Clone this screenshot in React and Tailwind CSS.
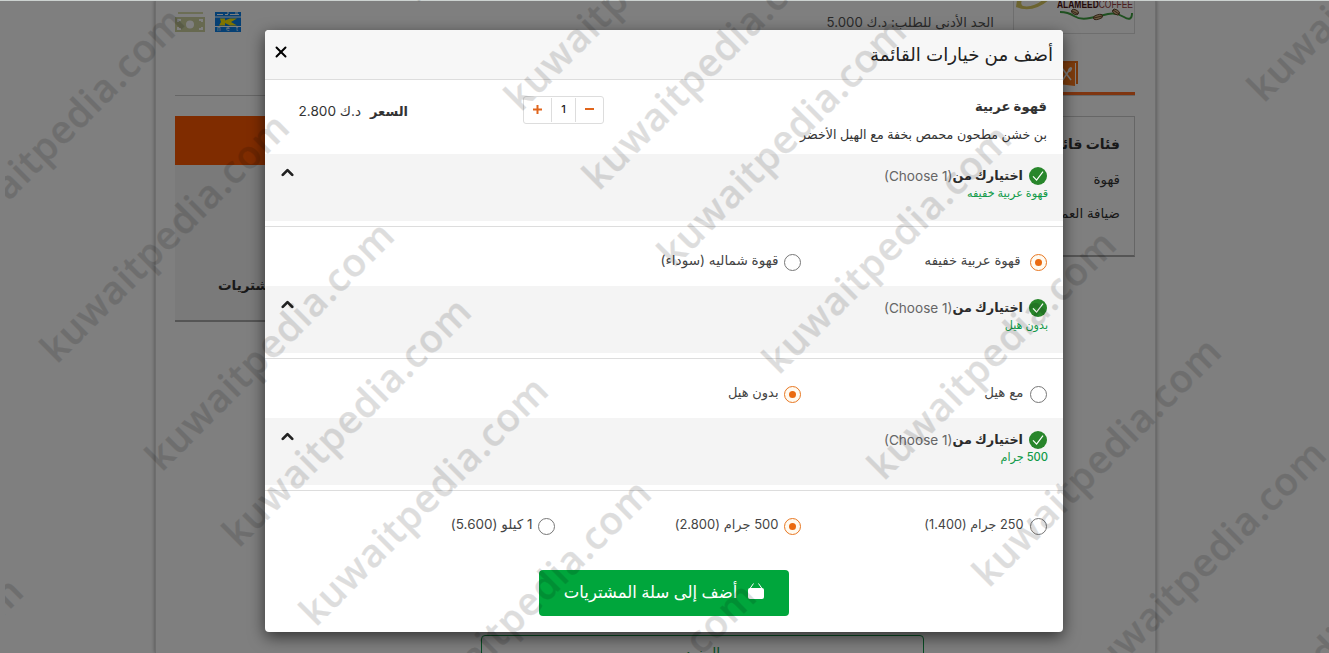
import React, { useState } from "react";
import { ChevronUp, X } from "lucide-react";

const GROUPS = [
  {
    id: "type",
    picked: 0,
    options: [
      { label: "قهوة عربية خفيفه", className: "mr-[9px] text-[13.2px]" },
      { label: "قهوة شماليه (سوداء)", className: "mr-[5px] text-[13.6px]" },
    ],
    summary: "قهوة عربية خفيفه",
  },
  {
    id: "cardamom",
    picked: 1,
    options: [
      { label: "مع هيل", className: "mr-[6px] text-[13.4px]" },
      { label: "بدون هيل", className: "mr-[5px] text-[13px]" },
    ],
    summary: "بدون هيل",
  },
  {
    id: "weight",
    picked: 1,
    options: [
      { label: "250 جرام (1.400)", className: "mr-[6px] text-[12.7px]" },
      { label: "500 جرام (2.800)", className: "mr-[5px] text-[13px]" },
      { label: "1 كيلو (5.600)", className: "mr-[5px] text-[13.5px]" },
    ],
    summary: "500 جرام",
  },
];

// left / top of the baseline start of every stamp
const STAMPS = [
  [-49, 258], [56, 364], [161, 472], [238, 548], [315, 627], [418, 730], [523, 833],
  [416, 3], [520, 112], [598, 191], [673, 268], [778, 375], [883, 481], [988, 588],
  [1093, 691], [1198, 796], [1263, 103], [-210, 828],
];

const CheckBadge = () => (
  <svg viewBox="0 0 18 18" className="w-[18px] h-[18px] shrink-0">
    <circle cx="9" cy="9" r="9" fill="#28862b" />
    <path d="M4 9.4 L7.6 13.1 L14 4.6" fill="none" stroke="#fff" strokeWidth="1.2" />
  </svg>
);

const Radio = ({ checked }) => (
  <span
    className={`w-[17px] h-[17px] rounded-full border flex items-center justify-center shrink-0 ${
      checked ? "border-[#e87722] bg-[#fffaf0]" : "border-[#777] bg-white"
    }`}
  >
    {checked && <span className="w-[7px] h-[7px] rounded-full bg-[#ea6a10]" />}
  </span>
);

const OptionGroup = ({ group }) => {
  const [picked, setPicked] = useState(group.picked);

  return (
    <div className="h-[132px] flex flex-col">
      {/* Group header */}
      <div className="h-[67px] bg-[#f4f4f4] flex justify-between pr-[15px] pl-[13px] pt-[13px]">
        <div>
          <div className="flex items-center h-[18px] mr-px whitespace-nowrap">
            <CheckBadge />
            <span className="mr-[6px] text-[12.8px] font-bold text-[#2b2b2b]">اختيارك من</span>
            <span className="text-[13.6px] text-[#666]" dir="ltr">
              (Choose 1)
            </span>
          </div>
          <div className="text-[11.2px] leading-[16px] text-[#109a48] font-medium whitespace-nowrap">
            {group.summary}
          </div>
        </div>
        <ChevronUp className="w-[19px] h-[19px] -mt-[4px] text-[#222]" strokeWidth={3.5} />
      </div>

      {/* Options */}
      <div className="mt-[5px] border-t border-[#ddd] pr-[16.5px] pt-[26.5px] flex">
        {group.options.map((o, idx) => (
          <div
            key={idx}
            className="w-[246px] h-[17px] flex items-center cursor-pointer"
            onClick={() => setPicked(idx)}
          >
            <Radio checked={picked === idx} />
            <span className={`whitespace-nowrap leading-[17px] -mt-[4px] text-[#444] ${o.className}`}>
              {o.label}
            </span>
          </div>
        ))}
      </div>
    </div>
  );
};

const Shop = () => (
  <div className="w-[1001px] h-[653px] mr-[173px] border-x border-[#ddd] bg-white shadow-[0_0_4px_#999] pr-[20px] pl-[19px] flex flex-col">
    <div className="h-[34px] flex justify-between shrink-0">
      <div className="flex">
        <div className="w-[122px] h-[34px] border border-t-0 border-[#ddd] overflow-hidden" dir="ltr">
          <svg viewBox="0 0 122 34" className="w-[122px] h-[34px]">
            <path d="M2 7 Q18 14 35 0 L29 0 Q18 8 9 6 Q6 4 8 0 L3 0z" fill="#d9c860" />
            <text x="43" y="8" fontSize="10.5" textLength="76" lengthAdjust="spacingAndGlyphs" fontFamily="Liberation Sans">
              <tspan fontWeight="bold" fill="#4a1010">ALAMEED</tspan>
              <tspan fill="#963d3d">COFFEE</tspan>
            </text>
            <path d="M46 12 Q54 12 60 16 T76 18 T94 14 T110 17 T118 13" fill="none" stroke="#3fa040" strokeWidth="2" />
            <g fill="#d8b888" stroke="#50301a" strokeWidth="0.8">
              <ellipse cx="61" cy="12" rx="3.8" ry="2.3" transform="rotate(25 61 12)" />
              <ellipse cx="84" cy="17" rx="4.8" ry="2.3" transform="rotate(-15 84 17)" />
              <ellipse cx="102" cy="12" rx="3.8" ry="2.3" transform="rotate(30 102 12)" />
              <path d="M58 11l6 3M80 18l8-2M99 10l6 4" />
            </g>
          </svg>
        </div>
        <span className="mr-[19px] mt-[12px] text-[13.25px] leading-[20px] text-[#555] whitespace-nowrap">
          الحد الأدنى للطلب: د.ك 5.000
        </span>
      </div>
      <div className="flex gap-[10px] mt-[12px]">
        <svg viewBox="0 0 26 20" className="w-[26px] h-[20px]" direction="ltr">
          <rect width="26" height="20" fill="#0d80e8" />
          <rect y="4.5" width="26" height="1" fill="#fff" />
          <rect y="14" width="26" height="1" fill="#fff" />
          <path d="M5 6.500h5v2L15 6.500h7l-6 3.500 6 3.500h-7L10 11v2.500H4l2-3.500z" fill="#ffe800" />
          <path d="M2 2.500h6M10 2.500h3M15 2.500h9M12 1h2M20 1h3" stroke="#fff" strokeWidth="1.2" />
          <text fontSize="6" fill="#fff" y="19">
            <tspan x="2">n</tspan>
            <tspan x="11">e</tspan>
            <tspan x="21">t</tspan>
          </text>
        </svg>
        <svg viewBox="0 0 30 20" className="w-[30px] h-[20px]">
          <rect x="3" width="25" height="2" fill="#d8dcaa" />
          <rect y="5" width="30" height="15" fill="#cfd2a0" />
          <circle cx="15" cy="12.5" r="4" fill="#fff" />
          <path d="M3 10V8h3M24 8h3v2M3 15v2h3M24 17h3v-2" fill="none" stroke="#fff" strokeWidth="2" />
        </svg>
      </div>
    </div>

    <div className="h-[62px] shrink-0 border-b border-[#ccc] flex flex-col justify-end">
      <svg viewBox="0 0 20 26" className="w-[20px] h-[26px] mr-[57px] mb-[5px]">
        <path d="M2 0h18v23h-2V2H2z" fill="#f07018" />
        <path d="M0 2h17v23L0 23z" fill="#ff7a1a" />
        <path d="M4 7l9 12M12 8L4 20" stroke="#fff" strokeWidth="1.5" />
        <ellipse cx="12" cy="8.500" rx="1.700" ry="2.700" fill="#fff" transform="rotate(35 12 8.500)" />
      </svg>
      <div className="h-[3px] w-[300px] bg-[#ff6a20]" />
    </div>

    <div className="flex justify-between mt-[20px]">
      <div className="w-[240px] h-[141px] border border-[#ccc] border-b-2 border-b-[#aaa] pr-[14px] pt-[17px] text-[#333]">
        <div className="text-[14px] leading-[20px] font-bold">فئات قائمة الطعام</div>
        <div className="text-[13.4px] leading-[20px] mt-[15px]">قهوة</div>
        <div className="text-[13.4px] leading-[20px] mt-[14px]">ضيافة العميد</div>
      </div>
      <div className="w-[240px] h-[206px] bg-[#f4f4f4] border-b-2 border-[#aaa]">
        <div className="h-[49px] bg-[#ff5800]" />
        <div className="mt-[110px] pl-[43px] text-left text-[13.5px] leading-[20px] font-bold text-[#333]">
          سلة المشتريات
        </div>
      </div>
    </div>

    <div className="mt-[313px] mr-[211px] w-[443px] h-[40px] shrink-0 rounded border border-[#109a48] text-center text-[14px] leading-[34px] text-[#109a48]">
      المزيد
    </div>
  </div>
);

const MenuModal = () => {
  const [qty, setQty] = useState(1);

  return (
    <div className="w-[798px] h-[602px] bg-white rounded-[4px] overflow-hidden shadow-[0_5px_16px_rgba(0,0,0,0.6)]">
      <div className="h-[50px] bg-[#f7f7f7] border-b border-[#ddd] flex items-center justify-between pr-[10px] pl-[7px]">
        <div className="text-[18.3px] text-[#222] whitespace-nowrap">أضف من خيارات القائمة</div>
        <X className="w-[18px] h-[18px] -mt-[5px] text-black" strokeWidth={2.6} />
      </div>

      {/* Item, quantity and price */}
      <div className="h-[74px] flex pr-4 pt-4">
        <div className="w-[443px] shrink-0 whitespace-nowrap text-[#333]">
          <div className="text-[13.2px] leading-[20px] font-bold">قهوة عربية</div>
          <div className="text-[12.65px] leading-[20px] mt-[9px]">بن خشن مطحون محمص بخفة مع الهيل الأخضر</div>
        </div>
        <div className="w-[81px] h-[28px] border border-[#ddd] rounded-[3px] flex items-center shrink-0">
          <button
            className="w-[27px] h-full flex items-center justify-center"
            onClick={() => setQty(Math.max(1, qty - 1))}
          >
            <span className="w-[9px] h-[2px] bg-[#e0651c] -mt-[2px]" />
          </button>
          <span className="w-[25px] h-[24px] border-x border-[#ddd] text-center text-[11px] leading-[23px] font-medium text-[#222]">
            {qty}
          </span>
          <button className="flex-1 h-full flex items-center justify-center" onClick={() => setQty(qty + 1)}>
            <svg viewBox="0 0 9 9" className="w-[9px] h-[9px] -mt-[2px]">
              <path d="M4.5 0v9M0 4.5h9" stroke="#e0651c" strokeWidth="2" />
            </svg>
          </button>
        </div>
        <div className="mr-[115px] mt-[5px] text-[13px] leading-[20px] text-[#333] whitespace-nowrap flex gap-[9px]">
          <b>السعر</b>
          <span className="text-[13.6px]">د.ك 2.800</span>
        </div>
      </div>

      {GROUPS.map((g) => (
        <OptionGroup key={g.id} group={g} />
      ))}

      <button className="w-[250px] h-[46px] mt-[20px] mr-[274px] rounded-[4px] bg-[#00a63c] text-white flex items-center justify-center gap-[11px]">
        <svg viewBox="0 0 16 16" className="w-[16px] h-[16px] -mt-[5px]">
          <rect y="5" width="16" height="11" rx="2" fill="#fff" />
          <path d="M2 5.500L5.500 .5M14 5.500L10.500 .5" stroke="#fff" />
        </svg>
        <span className="text-[16.5px] font-medium whitespace-nowrap -mt-[2px]">أضف إلى سلة المشتريات</span>
      </button>
    </div>
  );
};

const App = () => {
  return (
    <div
      dir="rtl"
      className="relative w-[1329px] h-[653px] overflow-hidden bg-white font-['Inter','DejaVu_Sans',sans-serif]"
    >
      <Shop />

      <div className="absolute inset-0 bg-black/50 border-t border-[#ccd2d0] pt-[29px] pr-[266px]">
        <MenuModal />
      </div>

      {/* Watermark layer */}
      <div className="absolute inset-y-0 left-[5px] right-0 overflow-hidden pointer-events-none opacity-[0.13]" dir="ltr">
        {STAMPS.map(([x, y], idx) => (
          <span
            key={idx}
            style={{ left: x - 5, top: y - 42 }}
            className="absolute origin-[0_42px] -rotate-45 leading-[56px] text-[38.5px] font-semibold tracking-[0.9px] whitespace-nowrap text-black [-webkit-text-stroke:0.3px_black] font-['Open_Sans',sans-serif]"
          >
            kuwaitpedia.com
          </span>
        ))}
      </div>
    </div>
  );
};

export default App;
